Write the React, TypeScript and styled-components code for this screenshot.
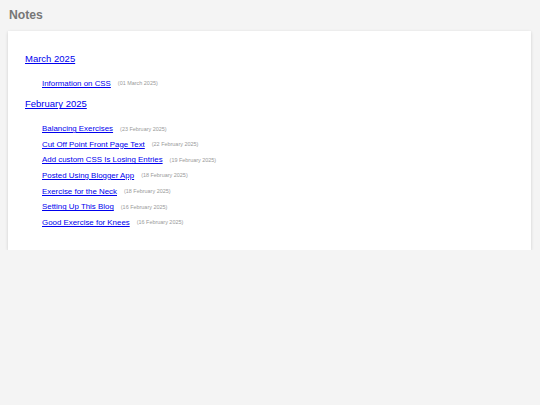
import styled, { createGlobalStyle } from "styled-components";

const GlobalStyle = createGlobalStyle`
  body {
    margin: 0;
    background: #f4f4f4;
    font-family: "Liberation Sans", Arial, sans-serif;
  }
`;

const months = [
  {
    name: "March 2025",
    posts: [{ title: "Information on CSS", date: "01 March 2025" }],
  },
  {
    name: "February 2025",
    posts: [
      { title: "Balancing Exercises", date: "23 February 2025" },
      { title: "Cut Off Point Front Page Text", date: "22 February 2025" },
      { title: "Add custom CSS Is Losing Entries", date: "19 February 2025" },
      { title: "Posted Using Blogger App", date: "18 February 2025" },
      { title: "Exercise for the Neck", date: "18 February 2025" },
      { title: "Setting Up This Blog", date: "16 February 2025" },
      { title: "Good Exercise for Knees", date: "16 February 2025" },
    ],
  },
];

const App = () => {
  return (
    <Page>
      <GlobalStyle />
      <Title>Notes</Title>
      <Card>
        {months.map((month) => (
          <Month key={month.name}>
            <MonthLink href="#">{month.name}</MonthLink>
            <PostList>
              {month.posts.map((post) => (
                <Post key={post.title}>
                  <PostLink href="#">{post.title}</PostLink>
                  <PostDate>({post.date})</PostDate>
                </Post>
              ))}
            </PostList>
          </Month>
        ))}
      </Card>
    </Page>
  );
};

export default App;

const Page = styled.div`
  padding: 0 9px 0 8px;
`;
const Title = styled.h1`
  margin: 0;
  padding: 8px 1px 9px;
  font-size: 12.2px;
  line-height: 14px;
  font-weight: bold;
  color: #777;
`;
const Card = styled.div`
  background: #fff;
  padding: 22px 17px 20px;
  box-shadow: 0 1px 3px rgba(0, 0, 0, 0.16);
`;
const Month = styled.div`
  & + & {
    margin-top: 7.5px;
  }
`;
const MonthLink = styled.a`
  display: block;
  width: fit-content;
  font-size: 9.5px;
  line-height: 12px;
  color: #0000ee;
  text-decoration: underline;
`;
const PostList = styled.ul`
  list-style: none;
  margin: 10.3px 0 0;
  padding: 0 0 0 17px;
`;
const Post = styled.li`
  display: flex;
  align-items: center;
  gap: 7px;
  height: 15.65px;
`;
const PostLink = styled.a`
  font-size: 7.9px;
  color: #0000ee;
  text-decoration: underline;
`;
const PostDate = styled.span`
  font-size: 5.45px;
  color: #999;
`;
